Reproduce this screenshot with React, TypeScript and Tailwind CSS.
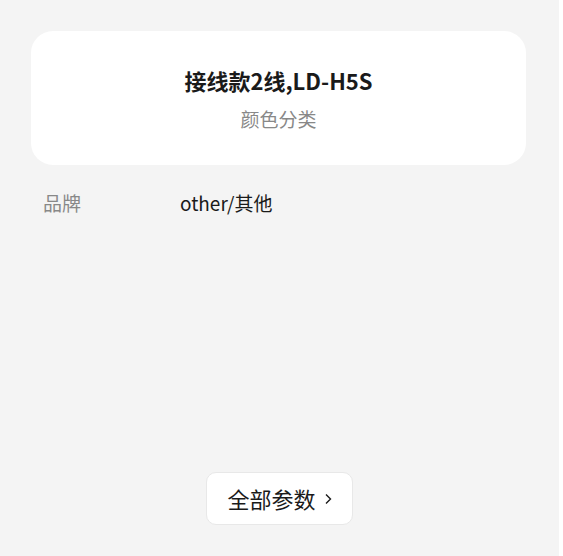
export default function App() {
  const font = { fontFamily: '"Noto Sans CJK SC", "Noto Sans", sans-serif' };
  return (
    <div className="flex h-[556px] w-[563px] bg-white" style={font}>
      <div className="flex h-full w-[559px] flex-col bg-[#f4f4f4]">
        <div className="mx-[31px] mt-[31px] mr-[33px] flex h-[134px] flex-col items-center justify-center rounded-[22px] bg-white">
          <div className="text-[22px] font-bold leading-[28px] text-[#1a1a1a]">接线款2线,LD-H5S</div>
          <div className="mt-[12px] text-[19px] leading-[25px] text-[#888888]">颜色分类</div>
        </div>
        <div className="mt-[25px] flex items-center text-[19px] leading-[25px]">
          <div className="w-[180px] pl-[43px] text-[#888888]">品牌</div>
          <div className="text-[#1a1a1a]">other/其他</div>
        </div>
        <div className="flex-1" />
        <div className="mb-[31px] flex justify-center">
          <div className="flex h-[53px] w-[147px] items-center justify-center rounded-[10px] border border-[#e8e8e8] bg-white text-[22px] text-[#1a1a1a]">
            <span>全部参数</span>
            <svg className="ml-[9px]" width="7" height="12" viewBox="0 0 7 12" fill="none">
              <path d="M1 1.5 L5.5 6 L1 10.5" stroke="#1a1a1a" strokeWidth="1.4" />
            </svg>
          </div>
        </div>
      </div>
    </div>
  );
}
